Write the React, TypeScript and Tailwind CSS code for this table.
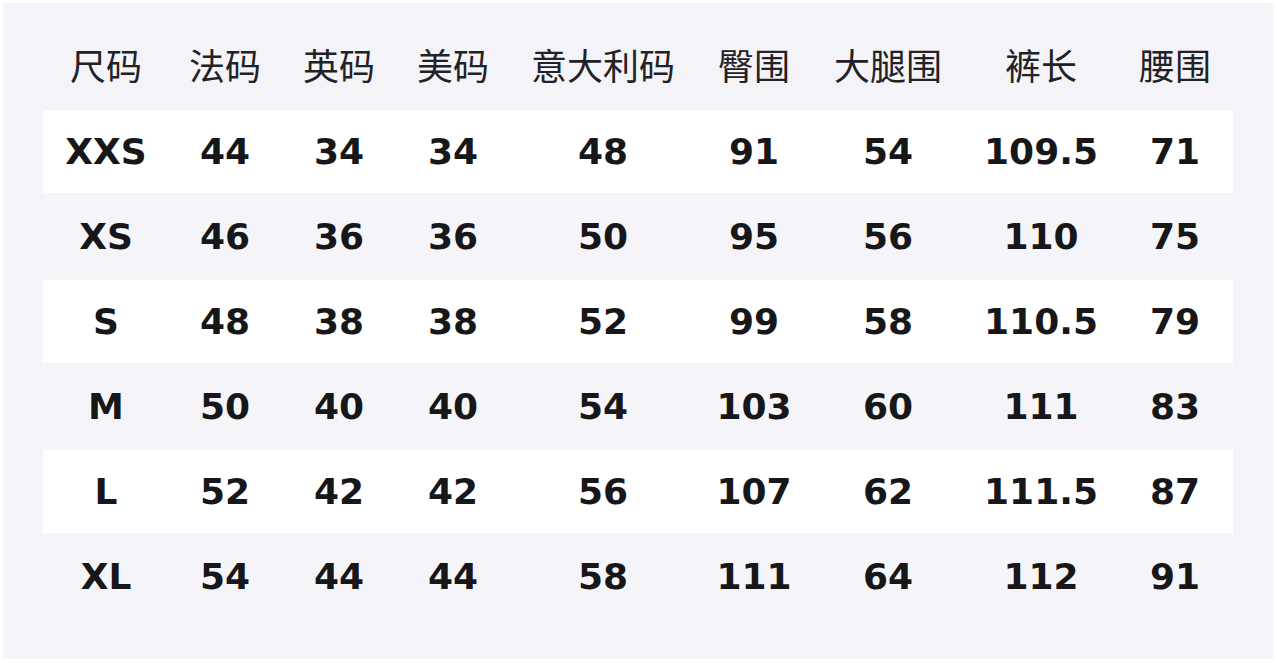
import React from "react";

const headers = ["尺码", "法码", "英码", "美码", "意大利码", "臀围", "大腿围", "裤长", "腰围"];
const rows = [
  ["XXS", "44", "34", "34", "48", "91", "54", "109.5", "71"],
  ["XS", "46", "36", "36", "50", "95", "56", "110", "75"],
  ["S", "48", "38", "38", "52", "99", "58", "110.5", "79"],
  ["M", "50", "40", "40", "54", "103", "60", "111", "83"],
  ["L", "52", "42", "42", "56", "107", "62", "111.5", "87"],
  ["XL", "54", "44", "44", "58", "111", "64", "112", "91"],
];

const grid = "grid grid-cols-[126px_112px_116px_112px_188px_114px_154px_152px_116px]";

export default function App() {
  return (
    <div
      className="w-[1277px] h-[663px] bg-white pt-[3px] pl-[3px]"
      style={{ fontFamily: '"DejaVu Sans", "Noto Sans CJK SC", sans-serif' }}
    >
      <div className="w-[1270px] h-[656px] bg-[#f3f3f8] pl-[40px] pt-[22px]">
        <div className="w-[1190px]">
          <div className={`${grid} h-[85px] items-center text-[36px] text-[#222226]`}>
            {headers.map((h) => (
              <div key={h} className="text-center leading-none">
                {h}
              </div>
            ))}
          </div>
          {rows.map((r, i) => (
            <div
              key={r[0]}
              className={`${grid} items-center text-[36px] font-bold text-[#17171a] ${
                i % 2 === 0 ? "bg-white h-[83px]" : "bg-[#f5f5f9] h-[87px]"
              }`}
            >
              {r.map((c, j) => (
                <div key={j} className="text-center leading-none">
                  {c}
                </div>
              ))}
            </div>
          ))}
        </div>
      </div>
    </div>
  );
}
